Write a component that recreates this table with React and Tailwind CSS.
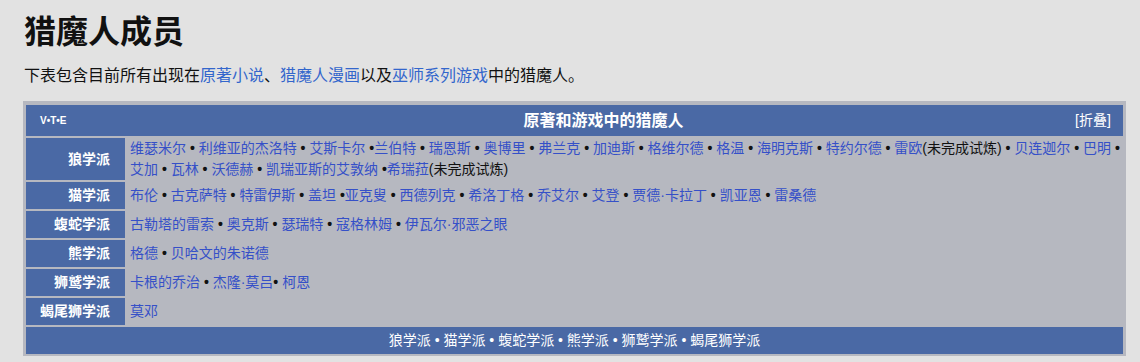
import React from 'react';

const LINK = 'text-[#3550c8]';

const rows = [
  {
    name: '狼学派',
    lines: [
      [
        ['维瑟米尔', ' • '], ['利维亚的杰洛特', ' • '], ['艾斯卡尔', ' •'], ['兰伯特', ' • '],
        ['瑞恩斯', ' • '], ['奥博里', ' • '], ['弗兰克', ' • '], ['加迪斯', ' • '],
        ['格维尔德', ' • '], ['格温', ' • '], ['海明克斯', ' • '], ['特约尔德', ' • '],
        ['雷欧', '(未完成试炼) • '], ['贝连迦尔', ' • '], ['巴明', ' •'],
      ],
      [
        ['艾加', ' • '], ['瓦林', ' • '], ['沃德赫', ' • '], ['凯瑞亚斯的艾敦纳', ' •'],
        ['希瑞菈', '(未完成试炼)'],
      ],
    ],
  },
  {
    name: '猫学派',
    lines: [
      [
        ['布伦', ' • '], ['古克萨特', ' • '], ['特雷伊斯', ' • '], ['盖坦', ' •'],
        ['亚克叟', ' • '], ['西德列克', ' • '], ['希洛丁格', ' • '], ['乔艾尔', ' • '],
        ['艾登', ' • '], ['贾德·卡拉丁', ' • '], ['凯亚恩', ' • '], ['雷桑德', ''],
      ],
    ],
  },
  {
    name: '蝮蛇学派',
    lines: [
      [['古勒塔的雷索', ' • '], ['奥克斯', ' • '], ['瑟瑞特', ' • '], ['寇格林姆', ' • '], ['伊瓦尔·邪恶之眼', '']],
    ],
  },
  { name: '熊学派', lines: [[['格德', ' • '], ['贝哈文的朱诺德', '']]] },
  { name: '狮鹫学派', lines: [[['卡根的乔治', ' • '], ['杰隆·莫吕', '• '], ['柯恩', '']]] },
  { name: '蝎尾狮学派', lines: [[['莫邓', '']]] },
];

// split the trailing text into plain words and bold bullets
const Tail = ({ text }) => {
  const parts = text.split('•');
  return parts.map((p, i) => (
    <React.Fragment key={i}>
      {p}
      {i < parts.length - 1 && <b className="font-bold">•</b>}
    </React.Fragment>
  ));
};

const App = () => {
  return (
    <div className="w-[1140px] h-[362px] overflow-hidden bg-[#e2e2e2] pl-[23px] pt-[12px] font-['Liberation_Sans','Noto_Sans_CJK_SC',sans-serif] text-[#111]">
      <h1 className="text-[32px] leading-[40px] font-bold pl-[1px]">猎魔人成员</h1>
      <p className="mt-[12px] text-[16px] leading-[24px] pl-[1px]">
        下表包含目前所有出现在<span className="text-[#3366cc]">原著小说</span>、
        <span className="text-[#3366cc]">猎魔人漫画</span>以及
        <span className="text-[#3366cc]">巫师系列游戏</span>中的猎魔人。
      </p>

      <div className="mt-[13px] w-[1103px] bg-[#b6b8c0] px-[3px] pt-[4px] pb-[2px]">
        <div className="grid grid-cols-[99px_minmax(0,1fr)] gap-[2px] text-[14px]">
          <div className="col-span-2 h-[31px] bg-[#4a69a5] flex items-center text-white">
            <div className="w-[106px] pl-[14px] text-[10px] font-bold">V•T•E</div>
            <div className="flex-1 text-center text-[16px] font-bold">原著和游戏中的猎魔人</div>
            <div className="w-[48px] pr-[14px] text-right text-[14px] whitespace-nowrap">[折叠]</div>
          </div>

          {rows.map((r) => (
            <React.Fragment key={r.name}>
              <div className="bg-[#4a69a5] text-white font-bold flex items-center justify-end pr-[15px]">
                {r.name}
              </div>
              <div className="flex flex-col justify-center min-h-[27px] pl-[3px] leading-[21px] whitespace-pre overflow-hidden">
                {r.lines.map((line, li) => (
                  <div key={li}>
                    {line.map(([link, tail], i) => (
                      <React.Fragment key={i}>
                        <span className={LINK}>{link}</span>
                        <Tail text={tail} />
                      </React.Fragment>
                    ))}
                  </div>
                ))}
              </div>
            </React.Fragment>
          ))}

          <div className="col-span-2 h-[27px] bg-[#4a69a5] flex items-center justify-center text-white whitespace-pre">
            狼学派 • 猫学派 • 蝮蛇学派 • 熊学派 • 狮鹫学派 • 蝎尾狮学派
          </div>
        </div>
      </div>
    </div>
  );
};

export default App;
